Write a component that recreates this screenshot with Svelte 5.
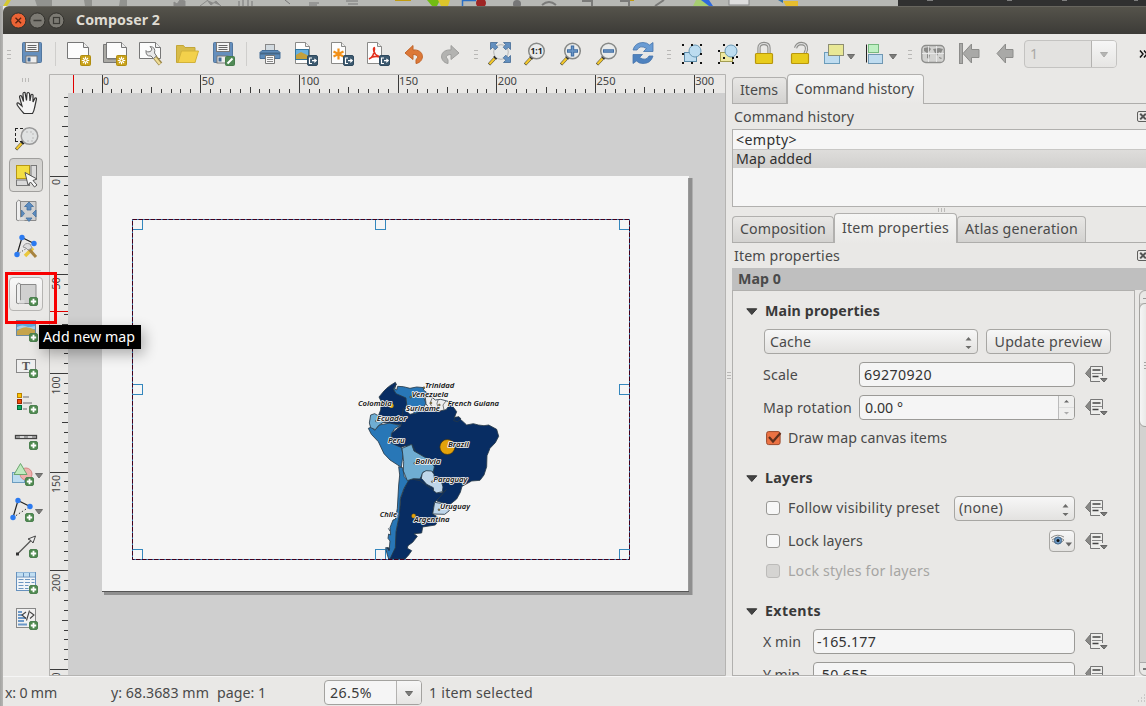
<script>
  // Adjusts letter spacing so that a label takes the given advance width.
  function fit(node, width) {
    const apply = () => {
      node.style.letterSpacing = '0px';
      const natural = node.getBoundingClientRect().width;
      node.style.letterSpacing = (width - natural) / node.textContent.length + 'px';
    };
    apply();
    document.fonts?.ready.then(apply);
  }

  const plus = '<rect x="15.5" y="15.5" width="8" height="8" rx="1.5" fill="#4f8a4f" stroke="#4c8050"/><path d="M19.5 16.8v5.4M16.8 19.5h5.4" stroke="#fff" stroke-width="1.8"/>';
  const star = '<rect x="13.5" y="13.5" width="10" height="10" rx="1" fill="#c9a21a" stroke="#b08d10"/><path d="M18.5 14.8v7.4M14.8 18.5h7.4M16 16l5 5M21 16l-5 5" stroke="#fff" stroke-width="1.1"/><circle cx="18.5" cy="18.5" r="1" fill="#c9a21a"/>';
  const exp = '<rect x="13.5" y="13.5" width="10" height="10" rx="1.5" fill="#3d5a70" stroke="#2f4a5e"/><path d="M18 16h-2.5v5.500h2.500M18 18.600h4M20.300 16.800l2 1.800-2 1.800" stroke="#fff" fill="none" stroke-width="1.100"/>';
  const page = '<path d="M1.500.500h10l4 4v17h-14z" fill="#fdfdfd" stroke="#8a8a88"/><path d="M11.500.500v4h4" fill="#eee" stroke="#8a8a88"/>';
  const wide = '<path d="M.5.5h16l5 5v11h-21z" fill="#fcfcfc" stroke="#777"/><path d="M16.500.500v5h5" fill="#eee" stroke="#777"/>';
  const floppy = '<rect x="2.500" y=".5" width="19" height="20" rx="1" fill="#658fbd" stroke="#52779f"/><rect x="5.500" y=".5" width="13" height="9" fill="#f4f4f4" stroke="#777"/><path d="M7.500 3.500h9M7.500 5.500h9M7.500 7.500h9" stroke="#666"/><rect x="6" y="14" width="11" height="7" fill="#eee" stroke="#777"/><rect x="7.500" y="15.500" width="3" height="4" fill="#426a95"/>';
  const handleStick = '<path d="M8.500 15.500l-6.500 7" stroke="#4b4b3c" stroke-width="3.200"/><path d="M7.500 16.500l-5 5.500" stroke="#f3c72c" stroke-width="2.200"/><path d="M7 14l3 3" stroke="#222" stroke-width="1.700"/>';
  const lens = handleStick + '<circle cx="13.500" cy="9" r="7.800" fill="#e9ebeb" stroke="#878987" stroke-width="1.500"/>';
  const paper = '<path d="M4.500 2.500h17.500v19h-17z" fill="#d0d0d0" stroke="#8a8a8a"/><path d="M2.500 4V21q3 2 4-1V2q-2-2-4 1z" fill="#efefef" stroke="#888"/><path d="M6.500 18h4v3.500h-6" fill="#ddd"/>';
  const dots = '<circle cx="8" cy="2.500" r="2.700" fill="#2b7af0"/><circle cx="20" cy="8.500" r="2.700" fill="#2b7af0"/><circle cx="3" cy="19.500" r="2.700" fill="#2b7af0"/>';
  const arrowL = '<path d="M0 11.500L8.500 2v5.500H16v8H8.500V21z" fill="#a9a9a7" stroke="#8c8c8a"/>';
  const lockBody = '<rect x="3.500" y="11.500" width="17" height="10" rx="1" fill="#e8cc1c" stroke="#b9970b" stroke-width="1.200"/>';
  const corners = (p) => p.map(([x, y]) => `<rect x="${x}" y="${y}" width="2" height="2" fill="#111"/>`).join('');

  const art = {
    save: floppy,
    newc: wide + star,
    dup: '<path d="M.5 2.500h4V17h11v3.500H.5z" fill="#aaa9a4" stroke="#777"/><path d="M3.500.500h15l5 5v11h-20z" fill="#fcfcfc" stroke="#777"/><path d="M18.500.500v5h5" fill="#eee" stroke="#777"/>' + star,
    manage: wide + '<path d="M14 13l7.500 9" stroke="#9b8647" stroke-width="4.500"/><path d="M14.500 14l6.500 8" stroke="#eedc95" stroke-width="2.500"/><path d="M11 4.500l2 2.500-1.500 2.500-3 .5L7 8.500q-.5 6 5 5.500l2.500 2.500 3-2.500L15.500 11Q17 5 11 4.500z" fill="#e8e8e8" stroke="#777"/>',
    open: '<path d="M1.500 20.500v-17h7l1.500 2h10v15z" fill="#d8bc49" stroke="#c3a638"/><path d="M3 20.500l3.500-11.500h17l-3.500 11.500z" fill="#f3d14b" stroke="#d2b23a"/>',
    saveas: floppy + '<rect x="14.500" y="14.500" width="9" height="9" rx="1" fill="#508a56" stroke="#477d4c"/><path d="M16.500 21.500l5-5" stroke="#fff" stroke-width="2"/>',
    print: '<rect x="7.500" y="2.500" width="9" height="8" fill="#d2dae0" stroke="#888"/><path d="M4 8.500h16l2 2v6H2v-6z" fill="#5e8cba" stroke="#466e98"/><path d="M2 11.500h20" stroke="#456787" stroke-width="2"/><path d="M7.500 13.500h9v8h-9z" fill="#f8f8f8" stroke="#777"/><path d="M9 15.500h6M9 17.500h6M9 19.500h6" stroke="#888"/>',
    image: page + '<rect x="1.500" y="7.500" width="13" height="10" fill="#68b0e0" stroke="#33759c"/><path d="M2 16v-3l5-3 8 4v3H2z" fill="#c3a03b"/>' + exp,
    svg: page + '<path d="M8.500 6.500v11M3.500 9.500l10 5M13.500 9.500l-10 5" stroke="#f29018" stroke-width="2.200"/>' + exp,
    pdf: page + '<path d="M3 17q5-2 5.500-10 0-3-1 0 0 6 7 8-7-2-11.500 2" fill="none" stroke="#e3301c" stroke-width="1.600"/>' + exp,
    undo: '<path d="M3 11l8-7.500v4.500c12-1 12 12 3 13.500v-4c3-2 2-5-3-5v5z" fill="#dc7838" stroke="#c26428"/>',
    redo: '<path d="M21 11l-8-7.500v4.500c-12-1-12 12-3 13.500v-4c-3-2-2-5 3-5v5z" fill="#b3b3b1" stroke="#9e9e9c"/>',
    full: handleStick + '<circle cx="14" cy="10" r="7.300" fill="#e6e8e8" stroke="#b5b7b7"/><g fill="#6390c0" stroke="#446b94" stroke-width=".8"><path id="a" d="M3.500.5h7L8.300 2.700l2.500 2.500-2.600 2.600-2.500-2.500L3.500 7.500z"/><path d="M23.500.5h-7l2.200 2.200-2.500 2.500 2.600 2.600 2.500-2.500 2.200 2.200z"/><path d="M23.500 20.500h-7l2.200-2.200-2.500-2.500 2.600-2.600 2.500 2.500 2.200-2.200z"/></g>',
    one: lens + '<text x="13.500" y="12.300" font-size="8.500" font-weight="700" text-anchor="middle" fill="#222" font-family="Noto Sans,sans-serif">1:1</text>',
    zin: lens + '<path d="M13.500 3.500v11M8 9h11" stroke="#3f6da3" stroke-width="3.400"/><path d="M13.500 4.500v9M9 9h9" stroke="#6b96c6" stroke-width="1.400"/>',
    zout: lens + '<path d="M8 9h11" stroke="#3f6da3" stroke-width="3.400"/><path d="M9 9h9" stroke="#6b96c6" stroke-width="1.400"/>',
    refresh: '<path d="M2 8q2-7.500 10-7.500 4 0 6.500 2.500L22 .5v9h-9.500l3-3Q9 2.500 6 8z" fill="#6a9cd4" stroke="#4675ac" stroke-width=".8"/><path d="M22 14q-2 7.500-10 7.500-4 0-6.500-2.500L2 21.500v-9h9.500l-3 3q6.500 4 9.500-1.500z" fill="#4e82bf" stroke="#4675ac" stroke-width=".8"/>',
    group: '<rect x="4.500" y="10.500" width="12" height="9" fill="#bcdcf0" stroke="#5c8ba9"/><circle cx="15" cy="9" r="6" fill="#bcdcf0" stroke="#6797b4"/>' + corners([[2, 2], [11, 2], [20, 2], [2, 11], [2, 20], [11, 20], [20, 20], [20, 11]]),
    ungroup: '<rect x="4.500" y="10.500" width="12" height="9" fill="#eee8a0" stroke="#a39d51"/><circle cx="15" cy="9" r="6" fill="#bcdcf0" stroke="#6797b4"/>' + corners([[7, 2], [20, 2], [2, 8], [7, 15], [16, 15], [20, 14], [2, 20], [16, 20]]),
    lock: '<path d="M7 11V6q0-4.500 5-4.500t5 4.500v5" fill="none" stroke="#8e8e8b" stroke-width="3.300"/><path d="M7 11V6q0-4.500 5-4.500t5 4.500v5" fill="none" stroke="#ddd" stroke-width="1.200"/>' + lockBody,
    unlock: '<path d="M7.500 6q1.500-4.500 6-4.500 5.500.5 5 6l-1.500 4" fill="none" stroke="#8e8e8b" stroke-width="3.300"/><path d="M7.500 6q1.500-4.500 6-4.500 5.500.5 5 6l-1.500 4" fill="none" stroke="#ddd" stroke-width="1.200"/>' + lockBody,
    raise: '<rect x="1.500" y="10.500" width="15" height="11" fill="#bfdcf0" stroke="#6b9cba"/><rect x="5.500" y="2.500" width="15" height="11" fill="#e9e896" stroke="#8e8e72"/>',
    align: '<path d="M1.500 2.500v18" stroke="#222"/><rect x="3.500" y="2.500" width="10" height="8" fill="#bff0c3" stroke="#77b97f"/><rect x="3.500" y="12.500" width="14" height="9" fill="#bfdcf0" stroke="#7097b2"/>',
    world: '<rect x=".8" y="3.500" width="22.500" height="17" rx="4" fill="#d2d2d0" stroke="#8e8e8c" stroke-width="1.300"/><path d="M3 6l5-1 2 2-2 3-2 1-3-2zM6 12l3 1-1 4-2-1zM12 7l6-1 4 1-2 4-2-1-2 4-2-3zM18 15l3 1-1 1-2-1z" fill="#8b8b89"/><path d="M7.500 4v16M15.500 4v16M1 11.500h22" stroke="#eee" stroke-width=".8"/>',
    first: '<rect x="2.500" y="1.500" width="3" height="20" fill="#a9a9a7" stroke="#8c8c8a"/><g transform="translate(6 0)">' + arrowL + '</g>',
    prev: '<g transform="translate(4 0)">' + arrowL + '</g>',
    hand: '<path d="M10 22.500q-3-3-6.500-8-1.500-3 1-2.500l3.500 3L5.500 6q0-2 2-1l2 5.500L9 3q0-2 2-1.500l1.500 8L13 2.500q1-2 2.500 0l.5 7.500 1-6q1-1.500 2 0v7l2-4q1.500-.5 1.500 1l-2 9q-.5 3-2 5.500z" fill="#f5f5f5" stroke="#333" stroke-width="1.200"/>',
    zoomsel: '<path d="M1 1.500h20M1.500 1v15M1 14.500h10" stroke="#222" stroke-dasharray="3 2" fill="none"/>' + handleStick + '<circle cx="15.500" cy="9" r="8.300" fill="#e0e2e2" stroke="#999" stroke-width="1.500"/><path d="M12 5h7v9h-7" stroke="#bbb" stroke-dasharray="2 2" fill="none"/>',
    select: '<rect x="17" y="2.500" width="5.500" height="13" fill="#dadada" stroke="#777"/><rect x="2.500" y="17" width="13" height="5.500" fill="#dadada" stroke="#777"/><rect x="2.500" y="2.500" width="13" height="13" fill="#f3de43" stroke="#b79714"/><path d="M11 9.500l3 12.500 2.500-3 4 5 2.500-2-4-4.500 4-1.500z" fill="#f5f5f5" stroke="#555"/>',
    movec: paper + '<path d="M15 3l4.500 4.500H17V11h-4V7.500h-2.500zM12 19h6l-3 3.500zM7.500 11l3 3.500-3 3.500zM22 11l-3.500 3.500L22 18z" fill="#5c8cc0" stroke="#42709f" stroke-width=".8"/>',
    nodes: '<path d="M8 2.500l12 6M8 2.500L3 19.500" stroke="#222" stroke-width="1.200"/><path d="M3 19.500L20 8.500" stroke="#333" stroke-dasharray="1 2"/><path d="M11 21l8-8" stroke="#ebc83c" stroke-width="3.500"/><path d="M14 13l8 9" stroke="#a78340" stroke-width="3"/><path d="M9 12q2-5 7-3l2 4-4 2-2-2z" fill="#ddd" stroke="#999"/>' + dots,
    map: paper + plus,
    picture: '<rect x="2.500" y="2.500" width="19" height="15" fill="#5da7dc" stroke="#6c8aa2"/><path d="M3 9q5-3 11 0 4 0 7-1v3H3z" fill="#a7d0e8"/><path d="M3 13q8-7 18-1v5H3z" fill="#c5a44c"/>' + plus,
    label: '<rect x="2.500" y="5.500" width="19" height="13" fill="#efefef" stroke="#888"/><text x="12" y="16" font-family="Liberation Serif,serif" font-size="12" font-weight="700" text-anchor="middle" fill="#555">T</text>' + plus,
    legend: '<rect x="3.500" y="3.500" width="4" height="4" fill="#fcc500" stroke="#b88000"/><rect x="3.500" y="9.500" width="4" height="4" fill="#f04a08" stroke="#9b2700"/><rect x="3.500" y="15.500" width="4" height="4" fill="#0caa60" stroke="#03693a"/><path d="M9 7h6M9 13h9M9 19h4" stroke="#aaa" stroke-width="2"/>' + plus,
    scalebar: '<rect x="1.500" y="9.500" width="21" height="3" fill="#eee" stroke="#444" stroke-width="1.300"/><path d="M2 11h4M10 11h4M18 11h4" stroke="#999" stroke-width="2"/>' + plus,
    shape: '<g transform="translate(-4 0)"><rect x="2.500" y="10.500" width="12" height="10" fill="#bcdcf0" stroke="#6c9dc0"/><circle cx="16" cy="12" r="6" fill="#eeb1ae" stroke="#d78783"/><path d="M10.500 1.500l6.500 11H4z" fill="#bfeabf" stroke="#6aa76e"/>' + plus + '</g>',
    nodeitem: '<g transform="translate(-4 0)"><path d="M8 2.500l12 6M8 2.500L3 19.500" stroke="#222" stroke-width="1.200"/><path d="M3 19.500L20 8.500" stroke="#333" stroke-dasharray="1.500 2"/>' + dots + plus + '</g>',
    arrow: '<path d="M3.500 20L18 5.500" stroke="#555" stroke-width="1.300"/><rect x="2" y="18.500" width="3" height="3" fill="#333"/><path d="M21.500 2l-2.500 7-2-2.500-3-1.500z" fill="#eee" stroke="#444"/>' + plus,
    table: '<rect x="2.500" y="2.500" width="19" height="18" fill="#f2f5f8" stroke="#6791bd"/><path d="M3 4.500h18" stroke="#c1def2" stroke-width="4"/><path d="M3 7h18M9.500 3v4M15.500 3v4" stroke="#6791bd"/><path d="M4.500 9.500h16M4.500 12.500h16M4.500 15.500h10M4.500 18.500h10" stroke="#6d96c1" stroke-dasharray="5 1.500"/>' + plus,
    html: '<rect x="2.500" y="2.500" width="19" height="19" fill="#f0f0f0" stroke="#888"/><path d="M4 6h4M4 9h5M4 12h8M4 15h6M4 18.500h9" stroke="#6b98c8" stroke-width="2"/><path d="M12 6l-4 3 4 3.500M16 6l4 3-4 3.500M15.500 4.500l-3 10" fill="none" stroke="#444" stroke-width="1.100"/>' + plus
  };

  const groups = [
    { lead: 'handle', items: ['save'] },
    { lead: 'line', items: ['newc', 'dup', 'manage', 'open', 'saveas'] },
    { lead: 'line', items: ['print', 'image', 'svg', 'pdf', 'undo', 'redo'] },
    { lead: 'handle', items: ['full', 'one', 'zin', 'zout', 'refresh'] },
    { lead: 'handle', items: ['group', 'ungroup', 'lock', 'unlock', 'raise', 'align'] },
    { lead: 'handle', items: ['world', 'first', 'prev'] }
  ];
  const sideTop = ['hand', 'zoomsel', 'select', 'movec', 'nodes'];
  const sideBottom = ['map', 'picture', 'label', 'legend', 'scalebar', 'shape', 'nodeitem', 'arrow', 'table', 'html'];

  const step = 9.87;
  const ticks = (from, to) => Array.from({ length: to - from + 1 }, (_, i) => from + i);
  const size = (i, major, mid, minor) => (i % 10 === 0 ? major : i % 5 === 0 ? mid : minor);

  const countries = [
    ['#082d63', 'M132 78L140 70 150 62 166 52 169 58 160 72 168 85 198 97 200 118 192 148 184 180 160 176 130 172 112 160 122 135 124 110 117 96z'],
    ['#082d63', 'M190 130L210 148 232 143 252 126 272 132 290 138 320 132 330 112 338 124 350 140 343 158 356 160 366 167 380 180 400 176 415 180 432 182 446 180 470 193 476 214 466 233 450 250 441 272 440 305 432 330 420 346 395 348 366 364 361 382 350 402 328 420 290 408 308 382 308 355 283 342 280 320 283 305 270 285 228 262 216 238 198 242 180 248 155 235 155 205 183 182z'],
    ['#082d63', 'M205 345L215 342 240 347 275 372 290 384 308 383 319 374 300 396 284 412 278 447 300 460 286 480 248 486 245 504 222 506 232 514 218 532 204 542 202 550 215 557 206 570 195 582 146 582 165 550 168 500 178 450 182 400 193 370z'],
    ['#2877b7', 'M176 305L188 308 193 335 205 348 192 370 181 400 178 450 168 500 166 548 150 582 146 582 141 566 137 548 148 549 150 528 144 520 146 507 152 510 150 488 159 465 166 463 172 430 176 360 179 330z'],
    ['#2877b7', 'M85 190L95 186 104 196 118 180 150 174 182 182 165 190 154 206 155 235 185 248 189 270 184 307 150 285 132 266 115 230 94 208z'],
    ['#6fadd2', 'M92 150L104 146 125 158 130 172 115 182 106 194 92 188 88 174z'],
    ['#6fadd2', 'M186 250L215 238 222 258 260 280 270 285 283 305 280 320 250 321 240 342 220 341 202 347 190 318 191 290z'],
    ['#bfd6ea', 'M247 324L258 317 275 318 282 328 283 342 304 349 309 366 307 380 290 384 281 378 280 368 260 358 244 340z'],
    ['#bfd6ea', 'M284 412L308 416 328 437 314 448 278 447z'],
    ['#2877b7', 'M168 58L164 72 170 75 173 64 190 65 210 70 230 66 253 68 250 75 262 84 252 99 258 115 248 132 226 146 210 132 200 118 198 99 168 86 160 72z'],
    ['#eeeeee', 'M256 97L276 97 286 105 302 103 324 109 329 120 318 134 300 138 282 134 266 128 258 116z']
  ];
  const labels = [
    ['Trinidad', 255, 68, 88], ['Venezuela', 215, 96, 110], ['Colombia', 54, 123, 101], ['Suriname', 198, 137, 102],
    ['French Guiana', 323, 123, 154], ['Ecuador', 110, 168, 90], ['Peru', 144, 233, 50], ['Brazil', 324, 247, 62],
    ['Bolivia', 226, 297, 75], ['Paraguay', 280, 351, 102], ['Uruguay', 300, 433, 90], ['Chile', 119, 457, 52], ['Argentina', 222, 470, 107]
  ];
  const handles = [[132.5, 219.5], [375.5, 219.5], [619.500, 219.500], [132.5, 384.5], [619.500, 384.5], [132.5, 549.5], [375.5, 549.5], [619.500, 549.5]];
</script>

{#snippet icon(name)}
  <svg class="ic" width="24" height="24" viewBox="0 0 24 24">{@html art[name]}</svg>
{/snippet}
{#snippet t(text, width)}<span class="t" use:fit={width}>{text}</span>{/snippet}
{#snippet down()}<svg class="down" width="8" height="6" viewBox="0 0 8 6"><path d="M.5.5h7l-3.500 4.500z" fill="#7d7d7b" stroke="#6b6b69" /></svg>{/snippet}
{#snippet updown()}<svg width="7" height="13" viewBox="0 0 7 13"><path d="M.5 4L3.500.5l3 3.500zM.5 9.500l3 3 3-3z" fill="#6c6c6a" transform="translate(0 1.500)" /></svg>{/snippet}
{#snippet defined()}
  <svg class="dd" width="23" height="18" viewBox="0 0 23 18">
    <path d="M5.500 2.500L.5 8.500l5 5z" fill="#898987" stroke="#747472" />
    <path d="M17.500 11V1.500H5.500v15H15" fill="#ededeb" stroke="#777" />
    <path d="M7.500 5h8M7.500 11.500h6" stroke="#444" stroke-width="1.500" /><path d="M7 8.500h10" stroke="#888" />
    <path d="M15.500 13.500h6.500L19 17z" fill="#7b7b79" stroke="#666" />
  </svg>
{/snippet}
{#snippet closer()}<svg class="closer" width="12" height="12" viewBox="0 0 12 12"><rect x=".5" y=".5" width="11" height="10" rx="1.500" fill="none" stroke="#5f5f5d" /><path d="M3.200 2.800l5.600 5.600M8.800 2.800L3.200 8.400" stroke="#555" stroke-width="2" /></svg>{/snippet}
{#snippet head(text, width, cls)}
  <div class="head {cls}"><svg width="12" height="8" viewBox="0 0 12 8"><path d="M.8 1.800h10L5.800 7.500z" fill="#444" stroke="#333" /></svg>{@render t(text, width)}</div>
{/snippet}

<div class="screen">
  <svg class="behind" width="1146" height="6" viewBox="0 0 1146 6">
    <rect width="898" height="6" fill="#b7b8b4" /><rect x="898" width="248" height="6" fill="#303030" />
    <path d="M3 6L7 0h4L7 6z" fill="#d7c92e" /><path d="M35 0h17v6H37zM84 0h8v6h-7zM120 0h7v6h-8z" fill="#92938f" /><path d="M174 6V2l3 2 3-4 5 1v5zM200 6l8-6M207 0l4 5 5-4 5 5" fill="#8b8b89" stroke="#8b8b89" />
    <path d="M239 1v5M243 0v6M248 0v6M252 1v5M285 0l5 4M309 3h10M309 5h8M346 1h12M348 4h10" stroke="#777" fill="none" />
    <path d="M395 0h16M620 0h14" stroke="#c09b10" stroke-width="2" /><path d="M427 0l5 6h5l3-6z" fill="#72bc13" /><path d="M438 0l3 6h7l2-6z" fill="#ddc62b" /><path d="M462.500 6V0M462 .5h14" stroke="#2b6fc4" stroke-width="1.500" />
    <circle cx="481" cy="3" r="5" fill="#9e2524" /><circle cx="517" cy="4" r="4" fill="#777" /><path d="M542 5q7-6 14 0M582 1h10v5M620 1h9v5M655 6l9-6" fill="none" stroke="#7b7b79" stroke-width="2" /><path d="M693 6l3-6h8l5 6z" fill="#a7ce72" /><path d="M701 0h8l4 6h-4z" fill="#2f6add" /><rect x="729" y="-2" width="20" height="7" fill="#ddd" stroke="#888" />
    <path d="M778 0h5v3z" fill="#3471a4" /><path d="M783 1h15v5h-12z" fill="#e6bd2e" /><path d="M927 0h6M1007 0h5M1062 0h5M1134 0h4" stroke="#ccc" />
  </svg>
  <div class="edge"></div>
  <div class="window">
    <header class="title">
      <svg width="62" height="20" viewBox="0 0 62 20">
        <circle cx="15.300" cy="10.500" r="7.600" fill="#ec6335" stroke="#32312c" /><path d="M12.500 7.700l5.600 5.600M18.100 7.700l-5.600 5.600" stroke="#5a2310" stroke-width="1.300" />
        <circle cx="34.300" cy="10.500" r="7.600" fill="#7c7a73" stroke="#33322d" /><path d="M30.500 10.500h8" stroke="#3b3a35" stroke-width="1.300" />
        <circle cx="53.300" cy="10.500" r="7.600" fill="#7c7a73" stroke="#33322d" /><rect x="50.500" y="7.500" width="6" height="6" fill="none" stroke="#3b3a35" stroke-width="1.200" />
      </svg>
      {@render t('Composer 2', 84)}
    </header>

    <div class="tools">
      {#each groups as g}
        <i class={g.lead}></i>
        {#each g.items as name}
          <button class="tool" class:menu={name === 'raise' || name === 'align'}>{@render icon(name)}{#if name === 'raise' || name === 'align'}{@render down()}{/if}</button>
        {/each}
      {/each}
      <div class="combo pagesel"><div class="val">{@render t('1', 8)}</div><b>{@render down()}</b></div>
      <svg class="more" width="9" height="8" viewBox="0 0 9 8"><path d="M1 .5l3 3.500-3 3.500M5 .5l3 3.500-3 3.500" fill="none" stroke="#111" stroke-width="1.500" /></svg>
    </div>

    <div class="body">
      <nav class="side">
        <i class="hgrip"></i>
        {#each sideTop as name}<button class="stool" class:on={name === 'select'}>{@render icon(name)}</button>{/each}
        <i class="hline"></i>
        {#each sideBottom as name}<button class="stool" class:hover={name === 'map'}>{@render icon(name)}{#if name === 'shape' || name === 'nodeitem'}{@render down()}{/if}</button>{/each}
      </nav>

      <svg class="canvas" width="677" height="602" viewBox="49 74 677 602">
        <defs><clipPath id="frame"><rect x="132" y="219" width="498" height="340" /></clipPath><clipPath id="rule"><rect x="49" y="74" width="676" height="601" /></clipPath></defs>
        <rect x="49" y="74" width="677" height="602" fill="#e9e8e6" />
        <rect x="68" y="93" width="657" height="582" fill="#cfcfcf" />
        <g clip-path="url(#rule)" shape-rendering="crispEdges" stroke="#3b3b3b">
          {#each ticks(-2, 62) as i}<path d="M{Math.floor(102 + i * step) + 0.5} 93v-{size(i, 18, 6, 4)}" />{/each}
          {#each ticks(-8, 50) as i}<path d="M68 {Math.floor(176 + i * step) + 0.5}h-{size(i, 18, 6, 4)}" />{/each}
        </g>
        <g font-size="11.500" fill="#444" clip-path="url(#rule)">
          {#each ticks(0, 6) as i}<text x={103 + i * step * 10} y="85" textLength={i === 0 ? 6 : i === 1 ? 12.500 : 19} lengthAdjust="spacingAndGlyphs">{i * 50}</text>{/each}
          {#each ticks(0, 5) as i}
            <text transform="translate(60 {178 + i * step * 10 + (i === 0 ? 7 : i === 1 ? 13 : 19)}) rotate(-90)" textLength={i === 0 ? 6 : i === 1 ? 12.500 : 18} lengthAdjust="spacingAndGlyphs">{i * 50}</text>
          {/each}
        </g>
        <path d="M73.500 75v18M50 311.500h18" stroke="#e00000" />
        <path d="M49.500 675V74.500H725.500V675.500H49" fill="none" stroke="#b5b4b2" />
        <path d="M104 591h585V178h3.500v417H104z" fill="#8f8f8f" />
        <rect x="102" y="176" width="587" height="415" fill="#f5f5f5" />
        <path d="M102 591.500h587" stroke="#555" /><path d="M688.500 178v413" stroke="#999" />
        <g fill="none" stroke="#3487bd">{#each handles as [x, y]}<rect {x} {y} width="10" height="10" />{/each}</g>
        <g clip-path="url(#frame)">
          <g transform="translate(340 365) scale(.33333)">
            <path d="M190 180l50 30 80 140-40 60-70-40z" fill="#082d63" />
            <g stroke="#263947" stroke-width="2.500" stroke-linejoin="round">
              {#each countries as [fill, d]}<path {d} {fill} />{/each}
              <path d="M345 157l12-2 6 7-10 8-12-3zM141 548l8 3-2 6zM145 490l5 8" fill="#082d63" />
              <path d="M295 103l-4 12 4 20M318 108l-9 12 3 15M276 100l-6 15 8 14" fill="none" stroke="#666" />
            </g>
            <circle cx="322" cy="246" r="22.500" fill="#e3a20b" stroke="#3b2d10" stroke-width="2" />
            <circle cx="154" cy="122" r="7" fill="#e3a20b" /><circle cx="221" cy="453" r="6.500" fill="#e3a20b" stroke="#604000" />
            {#each [[252, 68], [212, 96], [273, 114], [298, 120], [109, 168], [145, 232], [224, 295], [277, 350], [297, 434]] as [x, y]}<circle cx={x} cy={y} r="3" fill="#9b7d32" stroke="#222" stroke-width="1" />{/each}
            <g font-family="Noto Sans, Open Sans, sans-serif" font-size="23" font-weight="600" font-style="italic" fill="#111" stroke="#f5f5f5" stroke-width="5" stroke-linejoin="round" style:paint-order="stroke">
              {#each labels as [name, x, y, w]}<text {x} {y} textLength={w} lengthAdjust="spacingAndGlyphs">{name}</text>{/each}
            </g>
          </g>
        </g>
        <rect x="132.500" y="219.500" width="497" height="340" fill="none" stroke="#3487bd" />
        <rect x="132.500" y="219.500" width="497" height="340" fill="none" stroke="#43001c" stroke-dasharray="4.500 1.500" />
      </svg>

      <aside class="dock">
        <i class="vgrip"></i>
        <section class="col">
          <div class="tabs one">
            <div class="tab" style:width="55px">{@render t('Items', 38)}</div>
            <div class="tab cur" style:width="137px">{@render t('Command history', 119)}</div>
          </div>
          <div class="cap first">{@render t('Command history', 120)}{@render closer()}</div>
          <div class="list">
            <div class="item">{@render t('<empty>', 61)}</div>
            <div class="item sel">{@render t('Map added', 76)}</div>
          </div>
          <i class="hgrip mid"></i>
          <div class="tabs">
            <div class="tab" style:width="102px">{@render t('Composition', 86)}</div>
            <div class="tab cur" style:width="123px">{@render t('Item properties', 107)}</div>
            <div class="tab" style:width="129px">{@render t('Atlas generation', 113)}</div>
          </div>
          <div class="cap">{@render t('Item properties', 106)}{@render closer()}</div>
          <div class="bar">{@render t('Map 0', 43)}</div>
          <div class="scroll">
            <div class="form">
              {@render head('Main properties', 115, 'h1')}
              <div class="row r1"><div class="btn sel1">{@render t('Cache', 41)}{@render updown()}</div><div class="btn upd">{@render t('Update preview', 108)}</div></div>
              <div class="row r2"><label>{@render t('Scale', 35)}</label><div class="input">{@render t('69270920', 68)}</div>{@render defined()}</div>
              <div class="row r3"><label>{@render t('Map rotation', 89)}</label><div class="input spin">{@render t('0.00 °', 38)}<b>
                <svg width="15" height="22" viewBox="0 0 15 22"><path d="M5 6.500L7.500 4 10 6.500z" fill="#666" /><path d="M5 16h5l-2.500 2.500z" fill="#aaa" /><path d="M0 11.500h15" stroke="#ddd" /></svg></b></div>{@render defined()}</div>
              <div class="row r4"><svg class="tick" width="17" height="16" viewBox="0 0 17 16"><rect x=".6" y="1.600" width="13.500" height="13" rx="2" fill="#ec7243" stroke="#9b4a2c" /><path d="M3 7l4 4.500L14.500 3" fill="none" stroke="#60301c" stroke-width="2.200" /></svg>{@render t('Draw map canvas items', 159)}</div>
              {@render head('Layers', 48, 'h2')}
              <div class="row r5"><i class="box"></i>{@render t('Follow visibility preset', 152)}<div class="btn none">{@render t('(none)', 44)}{@render updown()}</div>{@render defined()}</div>
              <div class="row r6"><i class="box"></i>{@render t('Lock layers', 75)}<div class="btn eye">
                <svg width="22" height="14" viewBox="0 0 22 14"><path d="M0 4q6-5 13-1M1 6q6-5 12 0-5 6-12 1" fill="#f5f5f5" stroke="#8b8b89" /><circle cx="7" cy="6.500" r="3.600" fill="#6d99c4" stroke="#44688c" /><circle cx="7" cy="6.500" r="1.500" fill="#111" /><path d="M14.500 8.500h6.500L17.750 12.500z" fill="#666" /></svg></div>{@render defined()}</div>
              <div class="row r7"><i class="box off"></i>{@render t('Lock styles for layers', 142)}</div>
              {@render head('Extents', 56, 'h3')}
              <div class="row r8"><label class="s">{@render t('X min', 38)}</label><div class="input">{@render t('-165.177', 59)}</div>{@render defined()}</div>
              <div class="row r9"><label class="s">{@render t('Y min', 37)}</label><div class="input">{@render t('-50.655', 51)}</div>{@render defined()}</div>
            </div>
            <div class="sb"><i class="up"></i><i class="thumb"></i><i class="dn"></i></div>
          </div>
        </section>
      </aside>
    </div>

    <footer class="status">
      <span class="sx">{@render t('x: 0 mm', 52)}</span><span class="sy">{@render t('y: 68.3683 mm', 98)}</span><span class="sp">{@render t('page: 1', 49)}</span>
      <div class="combo zoom"><div class="val">{@render t('26.5%', 42)}</div><b>{@render down()}</b></div>
      {@render t('1 item selected', 104)}
      <svg class="corner" width="8" height="8" viewBox="0 0 8 8"><path d="M6 1h1M3 4h1M6 4h1M0 7h1M3 7h1M6 7h1" stroke="#aaa" /></svg>
    </footer>
  </div>
  <div class="mark"></div>
  <div class="tip">{@render t('Add new map', 92)}</div>
</div>

<style>
  :global(body) { margin: 0; overflow: hidden; }
  .screen, .screen * { box-sizing: border-box; }
  .screen { position: relative; width: 1146px; height: 706px; overflow: hidden; display: grid; grid-template: 6px 700px / 3px 1143px; font: 14.200px/18px 'Noto Sans', 'Open Sans', sans-serif; color: #4a4a4a; background: #e9e8e6; }
  .screen svg { display: block; flex: none; overflow: visible; }
  .screen svg.behind { grid-column: 1 / 3; overflow: hidden; }
  .screen svg.canvas { overflow: hidden; }
  .edge { background: linear-gradient(90deg, #a3a3a1, #b7b6b4); }
  .window { display: flex; flex-direction: column; background: #e9e8e6; border-top-left-radius: 6px; overflow: hidden; }
  .t { display: inline-block; white-space: pre; flex: none; }
  i { display: block; flex: none; }
  button { all: unset; box-sizing: border-box; }
  .title { height: 28px; flex: none; display: flex; align-items: center; gap: 11px; padding: 0 0 1px; background: linear-gradient(#55534b, #3c3b37); border-top: 1px solid #67655e; color: #dfdbd2; font-weight: 700; }
  .tools { height: 40px; flex: none; display: flex; align-items: center; }
  .tool { width: 36px; height: 36px; flex: none; display: flex; align-items: center; justify-content: center; }
  .tool.menu { width: 42px; justify-content: flex-start; padding-left: 5px; }
  .tool.menu .down { margin: 6px 0 0; }
  .line { width: 11px; height: 24px; background: linear-gradient(#cfcecc, #cfcecc) 5px 0 / 1px 24px no-repeat; }
  .handle { width: 13px; height: 9px; background: repeating-linear-gradient(#b9b8b6 0 1px, transparent 1px 4px) 6px 0 / 4px 9px no-repeat; }
  .handle:first-child { width: 11px; background-position: 4px 0; }
  .combo { display: flex; align-items: stretch; border: 1px solid #a3a29f; border-radius: 4px; background: #f5f5f5; overflow: hidden; color: #3c3c3c; }
  .val { flex: 1; display: flex; align-items: center; }
  .combo b { width: 25px; flex: none; border-left: 1px solid #b3b2b0; display: flex; align-items: center; justify-content: center; background: linear-gradient(#f6f6f6, #e6e5e3); }
  .pagesel { width: 93px; height: 28px; flex: none; background: #e3e2e0; border-color: #c4c3c1; color: #a9a8a6; margin-left: 1px; padding-left: 5px; }
  .pagesel .down { opacity: .5; }
  .combo .down { margin-top: 2px; }
  .more { margin-left: 22px; }
  .body { height: 602px; flex: none; display: flex; }
  .side { width: 46px; flex: none; display: flex; flex-direction: column; align-items: center; padding-top: 4px; }
  .hgrip { width: 9px; height: 4px; margin-bottom: 3px; background: repeating-linear-gradient(90deg, #bbbab8 0 1px, transparent 1px 3px); }
  .stool { width: 34px; height: 34px; margin: 1px 0; flex: none; display: flex; align-items: center; justify-content: center; position: relative; border: 1px solid transparent; border-radius: 4px; }
  .stool .down { position: absolute; left: 25px; top: 15px; }
  .on { background: linear-gradient(#d2d1cf, #deddda); border-color: #a09f9d; }
  .hover { background: linear-gradient(#f8f8f8, #e9e8e6); border-color: #b5b4b2; }
  .hline { width: 30px; height: 11px; background: linear-gradient(#cccbc9, #cccbc9) 0 5px / 30px 1px no-repeat; }
  .dock { display: flex; width: 420px; flex: none; }
  .vgrip { width: 6px; background: repeating-linear-gradient(#b9b8b6 0 1px, transparent 1px 3px) 1px 298px / 4px 8px no-repeat; }
  .col { width: 415px; flex: none; }
  .tabs { height: 30px; display: flex; align-items: flex-end; border-bottom: 1px solid #aeadab; }
  .tab { height: 26px; flex: none; border: 1px solid #b1b0ae; border-bottom: 0; border-radius: 4px 4px 0 0; display: flex; align-items: center; padding: 0 0 2px 7px; background: linear-gradient(#e8e7e5, #d3d2d0); }
  .tab.cur { height: 30px; margin-bottom: -1px; padding-bottom: 2px; background: linear-gradient(#f6f6f5, #e9e8e6); }
  .cap { height: 25px; display: flex; align-items: center; justify-content: space-between; padding: 1px 0 0 2px; }
  .cap :global(.closer) { margin-right: -2px; }
  .list { height: 78px; background: #f6f6f6; border: 1px solid #b1b0ae; color: #303030; }
  .item { height: 19px; display: flex; align-items: center; padding-left: 3px; }
  .item.sel { background: linear-gradient(#dedddb, #d1d0ce); border-top: 1px solid #c8c7c5; }
  .hgrip.mid { margin: 1px 0 1px 206px; }
  .bar { height: 22px; background: #bfbfbf; display: flex; align-items: center; padding-left: 6px; font-weight: 700; }
  .scroll { display: flex; height: 386px; gap: 4px; }
  .form { width: 403px; height: 386px; flex: none; overflow: hidden; border: 1px solid #b1b0ae; padding-top: 3px; }
  .head { display: flex; align-items: center; gap: 7px; padding-left: 13px; height: 22px; font-weight: 700; color: #393939; }
  .h1 { height: 34px; }
  .h2 { margin-top: 16px; }
  .h3 { margin-top: 12px; }
  .row { display: flex; align-items: center; padding-left: 31px; }
  .r1 { height: 27px; gap: 8px; }
  .r2 { height: 32px; margin-top: 4px; padding-bottom: 1px; }
  .r3 { height: 34px; padding-bottom: 1px; }
  .r4 { height: 26px; padding-left: 33px; }
  .r4 .tick { margin-right: 5px; }
  .r5 { height: 39px; padding-bottom: 1px; }
  .r6 { height: 26px; }
  .r7 { height: 34px; color: #a6a5a3; }
  .r8 { height: 39px; }
  .r9 { height: 27px; }
  label { width: 95px; flex: none; margin-left: -1px; margin-right: 1px; }
  label.s { width: 49px; }
  .input { width: 216px; height: 25px; flex: none; border: 1px solid #9b9a97; border-radius: 4px; background: #f5f5f5; display: flex; align-items: center; padding-left: 4px; color: #333; }
  .spin { justify-content: space-between; padding-left: 5px; }
  .spin b { border-left: 1px solid #bbb; background: #efefee; border-radius: 0 3px 3px 0; height: 23px; }
  .s + .input { width: 262px; padding-left: 3px; }
  .row :global(.dd) { margin: -1px 0 0 10px; }
  .btn { height: 25px; flex: none; border: 1px solid #a7a6a3; border-radius: 4px; display: flex; align-items: center; justify-content: space-between; padding: 0 5px; background: linear-gradient(#f7f7f7, #e3e2e0); }
  .sel1 { width: 214px; }
  .upd { width: 125px; justify-content: center; }
  .none { width: 121px; margin-left: auto; padding-left: 4px; }
  .eye { width: 26px; height: 22px; margin-left: auto; padding: 0 0 0 1px; }
  .r5, .r6 { padding-right: 26px; }
  .box { width: 14px; height: 14px; border: 1px solid #999895; border-radius: 3px; background: #f7f7f7; margin: 0 8px 0 2px; }
  .box.off { background: #d5d4d2; border-color: #bcbbb9; }
  .sb { width: 14px; flex: none; background: #d3d2d0; border: 1px solid #aaa9a7; border-radius: 6px; display: flex; flex-direction: column; }
  .up { height: 12px; background: linear-gradient(#999, #999) 3px 7px / 5px 1px no-repeat #e9e8e6; border-radius: 6px 6px 0 0; }
  .thumb { height: 124px; margin: 0 -1px; background: repeating-linear-gradient(#a5a4a2 0 1px, transparent 1px 3px) 4px 58px / 8px 7px no-repeat, linear-gradient(90deg, #f5f5f5, #deddda); border: 1px solid #a3a29f; border-radius: 6px; }
  .dn { height: 13px; margin-top: auto; background: linear-gradient(#777, #777) 3px 5px / 5px 2px no-repeat #e9e8e6; border-top: 1px solid #aaa; border-radius: 0 0 6px 6px; }
  .status { height: 30px; flex: none; border-top: 1px solid #f5f5f5; display: flex; align-items: center; padding: 2px 0 0 2px; }
  .sx { width: 106px; }
  .sy { width: 106px; }
  .sp { width: 107px; }
  .zoom { width: 98px; height: 25px; margin-right: 7px; padding-left: 5px; }
  .corner { margin: 10px 0 0 auto; }
  .mark { position: absolute; left: 5px; top: 272px; width: 52px; height: 52px; border: 3px solid #f80000; }
  .tip { position: absolute; left: 39px; top: 325px; width: 102px; height: 24px; padding: 3px 4px; background: #000; color: #fff; box-shadow: 3px 5px 14px rgba(0, 0, 0, .3); }
</style>
